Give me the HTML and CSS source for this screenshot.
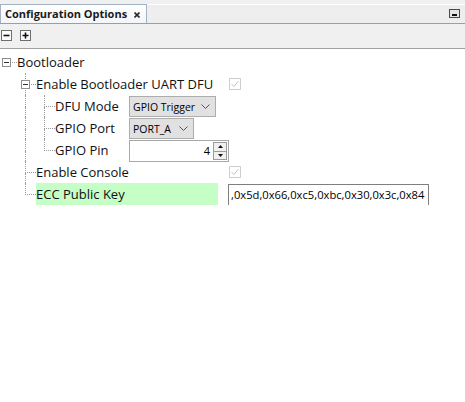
FILE: index.html
```html
<!DOCTYPE html>
<html>
<head>
<meta charset="utf-8">
<link rel="stylesheet" href="styles.css">
</head>
<body>
<div class="panel">
  <div class="titlebar">
    <div class="tab">
      <span class="tab-title">Configuration Options</span>
      <svg class="tab-close" width="6" height="6" viewBox="0 0 6 6"><path d="M0.5 0.5 L5.5 5.5 M5.5 0.5 L0.5 5.5" stroke="#2b2b2b" stroke-width="1.6" fill="none"/></svg>
    </div>
    <div class="min-btn"><span class="min-bar"></span></div>
  </div>
  <div class="toolbar">
    <svg class="tb-icon" width="11" height="11" viewBox="0 0 11 11"><rect x="0.5" y="0.5" width="10" height="10" fill="#fbfbfb" stroke="#6e6e6e"/><path d="M2.5 5.5 H8.5" stroke="#111" stroke-width="1.6"/></svg>
    <svg class="tb-icon" width="11" height="11" viewBox="0 0 11 11"><rect x="0.5" y="0.5" width="10" height="10" fill="#fbfbfb" stroke="#6e6e6e"/><path d="M2.5 5.5 H8.5 M5.5 2.5 V8.5" stroke="#111" stroke-width="1.6"/></svg>
  </div>
  <div class="tree">
    <div class="row">
      <div class="cell c-root">
        <span class="q-tr"></span>
        <span class="exp"><span class="exp-minus"></span></span>
      </div>
      <span class="label">Bootloader</span>
    </div>
    <div class="row lvl1">
      <div class="cell"></div>
      <div class="cell c-tee">
        <span class="q-tr"></span><span class="q-br"></span>
        <span class="exp"><span class="exp-minus"></span></span>
      </div>
      <span class="label">Enable Bootloader UART DFU</span>
      <svg class="check" width="12" height="12" viewBox="0 0 12 12"><rect x="0.5" y="0.5" width="11" height="11" fill="#fff" stroke="#cdcdcd"/><path d="M2.5 6 L5 8.5 L9.5 3" stroke="#c2c2c2" fill="none"/></svg>
    </div>
    <div class="row lvl2">
      <div class="cell"></div>
      <div class="cell c-pipe"><span class="q-tr"></span><span class="q-br"></span></div>
      <div class="cell c-tee"><span class="q-tr"></span><span class="q-br"></span></div>
      <span class="label">DFU Mode</span>
      <div class="combo combo-wide"><span>GPIO Trigger</span><svg width="9" height="5" viewBox="0 0 9 5"><path d="M0.5 0.5 L4.5 4.5 L8.5 0.5" stroke="#555" fill="none"/></svg></div>
    </div>
    <div class="row lvl2">
      <div class="cell"></div>
      <div class="cell c-pipe"><span class="q-tr"></span><span class="q-br"></span></div>
      <div class="cell c-tee"><span class="q-tr"></span><span class="q-br"></span></div>
      <span class="label">GPIO Port</span>
      <div class="combo combo-narrow"><span>PORT_A</span><svg width="9" height="5" viewBox="0 0 9 5"><path d="M0.5 0.5 L4.5 4.5 L8.5 0.5" stroke="#555" fill="none"/></svg></div>
    </div>
    <div class="row lvl2">
      <div class="cell"></div>
      <div class="cell c-pipe"><span class="q-tr"></span><span class="q-br"></span></div>
      <div class="cell c-end"><span class="q-tr"></span></div>
      <span class="label">GPIO Pin</span>
      <div class="spinner">
        <span class="spin-val">4</span>
        <div class="spin">
          <span class="spin-btn"><svg width="5" height="3" viewBox="0 0 5 3"><path d="M0 3 L2.5 0 L5 3 Z" fill="#111"/></svg></span>
          <span class="spin-btn"><svg width="5" height="3" viewBox="0 0 5 3"><path d="M0 0 L2.5 3 L5 0 Z" fill="#111"/></svg></span>
        </div>
      </div>
    </div>
    <div class="row lvl1">
      <div class="cell"></div>
      <div class="cell c-tee"><span class="q-tr"></span><span class="q-br"></span></div>
      <span class="label">Enable Console</span>
      <svg class="check" width="12" height="12" viewBox="0 0 12 12"><rect x="0.5" y="0.5" width="11" height="11" fill="#fff" stroke="#cdcdcd"/><path d="M2.5 6 L5 8.5 L9.5 3" stroke="#c2c2c2" fill="none"/></svg>
    </div>
    <div class="row lvl1">
      <div class="cell"></div>
      <div class="cell c-end"><span class="q-tr"></span></div>
      <span class="label hl">ECC Public Key</span>
      <div class="field">,0x5d,0x66,0xc5,0xbc,0x30,0x3c,0x84</div>
    </div>
  </div>
</div>
</body>
</html>
```
FILE: styles.css
```css
body {
  margin: 0;
  background: #ffffff;
  font-family: "Open Sans", "DejaVu Sans", sans-serif;
  color: #000;
}

.titlebar {
  height: 24px;
  box-sizing: border-box;
  padding-top: 4px;
  display: flex;
  justify-content: space-between;
  align-items: flex-start;
  background: linear-gradient(#f0f0f0 0 4px, #ffffff 4px 5px, #eeeeee 5px);
  border-bottom: 1px solid #8da2b7;
}

.tab {
  width: 147px;
  height: 19px;
  box-sizing: border-box;
  border: 1px solid #a3b3c5;
  border-bottom: none;
  background: linear-gradient(#ffffff, #f3f5f8);
  display: flex;
  align-items: center;
  padding-left: 4px;
}

.tab-title {
  font-weight: 700;
  font-size: 11px;
  line-height: 16px;
  color: #1a1a1a;
  white-space: nowrap;
}

.tab-close {
  margin-left: auto;
  margin-right: 6px;
  margin-top: 1px;
}

.min-btn {
  width: 11px;
  height: 9px;
  box-sizing: border-box;
  margin-top: 5px;
  margin-right: 5px;
  border: 1px solid #4a4a4a;
  background: #e6e6e6;
  display: flex;
  justify-content: center;
  align-items: flex-end;
  padding-bottom: 1px;
}

.min-bar {
  width: 5px;
  height: 2px;
  background: #111;
}

.toolbar {
  height: 25px;
  box-sizing: border-box;
  background: #f0f0f0;
  border-bottom: 1px solid #a0a0a0;
  padding: 6px 0 0 1px;
  display: flex;
  gap: 8px;
  align-items: flex-start;
}

.tb-icon {
  display: block;
}

.tree {
  padding-top: 2px;
}

.row {
  display: flex;
  align-items: flex-start;
  height: 22px;
}

.cell {
  flex: none;
  width: 19px;
  height: 22px;
  display: grid;
  grid-template-columns: 6px 11px 2px;
  grid-template-rows: 12px 10px;
}

.q-tr {
  grid-column: 2;
  grid-row: 1;
  box-sizing: border-box;
}

.q-br {
  grid-column: 2;
  grid-row: 2;
  box-sizing: border-box;
}

.c-pipe .q-tr,
.c-pipe .q-br,
.c-tee .q-br {
  border-left: 1px dotted #9a9a9a;
}

.c-tee .q-tr,
.c-end .q-tr {
  border-left: 1px dotted #9a9a9a;
  border-bottom: 1px dotted #9a9a9a;
}

.c-root .q-tr {
  border-bottom: 1px dotted #9a9a9a;
}

.exp {
  grid-column: 1 / 4;
  grid-row: 1 / 3;
  justify-self: start;
  align-self: start;
  margin: 7px 0 0 2px;
  width: 9px;
  height: 9px;
  box-sizing: border-box;
  border: 1px solid #8e8e8e;
  background: #ffffff;
  display: flex;
  align-items: center;
  justify-content: center;
}

.exp-minus {
  width: 5px;
  height: 1px;
  background: #333;
}

.label {
  flex: none;
  margin-left: -2px;
  font-size: 13px;
  line-height: 22px;
  height: 22px;
  white-space: nowrap;
  color: #111;
}

.lvl1 .label {
  width: 182px;
  margin-right: 10px;
}

.lvl2 .label {
  width: 64px;
  margin-right: 10px;
}

.label.hl {
  background: #c6ffc6;
}

.check {
  display: block;
  margin: 5px 0 0 1px;
}

.combo {
  height: 21px;
  margin-top: 1px;
  box-sizing: border-box;
  border: 1px solid #adadad;
  background: #e1e1e1;
  display: flex;
  align-items: center;
  justify-content: space-between;
  padding: 0 5px 0 3px;
  font-size: 10.5px;
  white-space: nowrap;
}

.combo svg {
  display: block;
}

.combo-wide {
  width: 87px;
}

.combo-narrow {
  width: 65px;
}

.spinner {
  width: 100px;
  height: 22px;
  margin-top: 1px;
  box-sizing: border-box;
  border: 1px solid #a8a8a8;
  background: #fff;
  display: flex;
}

.spin-val {
  flex: 1;
  text-align: right;
  padding-right: 2px;
  font-size: 11px;
  line-height: 20px;
}

.spin {
  width: 14px;
  margin: 1px;
  display: flex;
  flex-direction: column;
}

.spin-btn {
  flex: 1;
  border: 1px solid #9c9c9c;
  background: #f0f0f0;
  display: flex;
  align-items: center;
  justify-content: center;
}

.spin-btn + .spin-btn {
  border-top: none;
}

.spin-btn svg {
  display: block;
}

.field {
  width: 201px;
  height: 22px;
  margin-top: 1px;
  box-sizing: border-box;
  border: 1px solid #7f7f7f;
  background: #fff;
  padding-left: 2px;
  font-size: 11.2px;
  line-height: 20px;
  white-space: nowrap;
  overflow: hidden;
}
```
